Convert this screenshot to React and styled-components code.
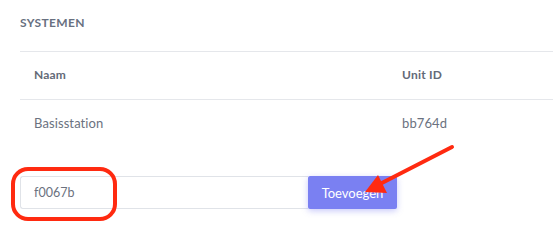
import React from "react";
import styled, { createGlobalStyle } from "styled-components";

const GlobalStyle = createGlobalStyle`
  html, body {
    margin: 0;
    padding: 0;
    background: #ffffff;
  }
  body {
    font-family: Lato, "Open Sans", "Liberation Sans", sans-serif;
    color: #6b7280;
  }
`;

const Page = styled.div`
  position: relative;
  width: 553px;
  height: 245px;
  overflow: hidden;
  padding-left: 20px;
  box-sizing: border-box;
`;

const Title = styled.div`
  padding-top: 15px;
  margin-bottom: 20px;
  font-size: 12px;
  line-height: 16px;
  font-weight: 700;
  letter-spacing: 0.35px;
  text-transform: uppercase;
  color: #687080;
`;

const Table = styled.div`
  display: grid;
  grid-template-columns: 368px 1fr;
`;

const Row = styled.div`
  display: contents;
`;

const Cell = styled.div`
  padding: 15px 0 16px 14px;
  line-height: 16px;
  font-size: ${(p) => (p.$head ? "12px" : "13px")};
  font-weight: ${(p) => (p.$head ? 700 : 400)};
  letter-spacing: ${(p) => (p.$head ? "0.2px" : "0.1px")};
  color: ${(p) => (p.$head ? "#636a77" : "#6b7280")};
  border-top: ${(p) => (p.$line ? "1px solid #e5e7eb" : "none")};
  border-bottom: ${(p) => (p.$head ? "1px solid #e5e7eb" : "none")};
`;

const Form = styled.div`
  display: flex;
  margin-top: 29px;
`;

const Input = styled.input`
  width: 288px;
  height: 33px;
  box-sizing: border-box;
  border: 1px solid #e0e3e8;
  border-right: none;
  border-radius: 3px 0 0 3px;
  padding: 0 0 0 13px;
  font-family: inherit;
  font-size: 12.5px;
  color: #6b7280;
  outline: none;
`;

const Button = styled.button`
  width: 89px;
  height: 33px;
  border: none;
  border-radius: 2px;
  background: #7a80f2;
  color: #ffffff;
  font-family: inherit;
  font-size: 13px;
  padding: 0;
  box-shadow: 0 2px 6px rgba(99, 102, 241, 0.35);
`;

const Overlay = styled.svg`
  position: absolute;
  left: 0;
  top: 0;
  pointer-events: none;
`;

export default function App() {
  return (
    <>
      <GlobalStyle />
      <Page>
        <Title>Systemen</Title>
        <Table>
          <Row>
            <Cell $head $line>Naam</Cell>
            <Cell $head $line>Unit ID</Cell>
          </Row>
          <Row>
            <Cell>Basisstation</Cell>
            <Cell>bb764d</Cell>
          </Row>
        </Table>
        <Form>
          <Input defaultValue="f0067b" />
          <Button>Toevoegen</Button>
        </Form>
        <Overlay width="553" height="245" viewBox="0 0 553 245">
          <rect x="13" y="169" width="102" height="50" rx="15" fill="none" stroke="#ff2a10" strokeWidth="4" />
          <line x1="452" y1="147" x2="376" y2="186" stroke="#ff2a10" strokeWidth="4" strokeLinecap="round" />
          <polygon points="365,192 378,175 387,193" fill="#ff2a10" />
        </Overlay>
      </Page>
    </>
  );
}
